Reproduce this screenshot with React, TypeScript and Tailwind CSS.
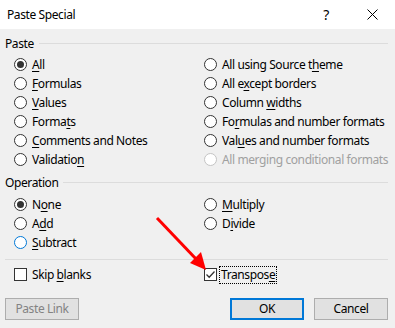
import type { ReactNode } from "react";

// Paste Special dialog, Windows 10 look
function Radio({ checked = false, disabled = false, hover = false }: { checked?: boolean; disabled?: boolean; hover?: boolean }) {
  const border = disabled ? "border-[#c4c4c4]" : hover ? "border-[#0078d7]" : "border-[#333333]";
  return (
    <span className={`flex items-center justify-center w-[13px] h-[13px] rounded-full border bg-white shrink-0 ${border}`}>
      {checked && <span className="block w-[7px] h-[7px] rounded-full bg-[#333333]" />}
    </span>
  );
}

function Check({ checked = false }: { checked?: boolean }) {
  return (
    <span className="flex items-center justify-center w-[13px] h-[13px] border border-[#333333] bg-white shrink-0">
      {checked && (
        <svg width="11" height="11" viewBox="0 0 11 11">
          <path d="M1.5 5.5 L4.2 8.2 L9.5 2.5" fill="none" stroke="#333333" strokeWidth="1.3" />
        </svg>
      )}
    </span>
  );
}

function Option({ children, checked, disabled, hover }: { children: ReactNode; checked?: boolean; disabled?: boolean; hover?: boolean }) {
  return (
    <div className="flex items-center gap-[5px] h-[19px] whitespace-nowrap">
      <Radio checked={checked} disabled={disabled} hover={hover} />
      <span className={disabled ? "text-[#a0a0a0]" : "text-black"}>{children}</span>
    </div>
  );
}

function U({ children }: { children: ReactNode }) {
  return <span className="underline underline-offset-2">{children}</span>;
}

function GroupLabel({ title }: { title: string }) {
  return (
    <div className="flex items-center h-[20px] pl-[5px] pr-[7px]">
      <span>{title}</span>
      <div className="flex-1 h-px bg-[#dcdcdc] ml-[5px] -mt-[2px]" />
    </div>
  );
}

export default function App() {
  return (
    <div
      className="relative w-[395px] h-[328px] bg-[#f0f0f0] text-[12px] leading-none tracking-[-0.4px] text-black overflow-hidden"
      style={{ fontFamily: '"Noto Sans", "Open Sans", sans-serif' }}
    >
      {/* Title bar */}
      <div className="flex items-center h-[29px] bg-white">
        <span className="pl-[7px] flex-1">Paste Special</span>
        <span className="w-[46px] text-center text-[14px]">?</span>
        <span className="w-[46px] flex justify-center">
          <svg width="11" height="11" viewBox="0 0 11 11">
            <path d="M0.5 0.5 L10.5 10.5 M10.5 0.5 L0.5 10.5" stroke="#000" strokeWidth="1" />
          </svg>
        </span>
      </div>

      <div className="mt-[5px]">
        <GroupLabel title="Paste" />
        <div className="grid grid-cols-[190px_1fr] pl-[14px] mt-px">
          <Option checked><U>A</U>ll</Option>
          <Option>All using Source t<U>h</U>eme</Option>
          <Option><U>F</U>ormulas</Option>
          <Option>All e<U>x</U>cept borders</Option>
          <Option><U>V</U>alues</Option>
          <Option>Column <U>w</U>idths</Option>
          <Option>Forma<U>t</U>s</Option>
          <Option>Fo<U>r</U>mulas and number formats</Option>
          <Option><U>C</U>omments and Notes</Option>
          <Option>Val<U>u</U>es and number formats</Option>
          <Option>Validatio<U>n</U></Option>
          <Option disabled>All merging conditional formats</Option>
        </div>

        <div className="mt-[4px]">
          <GroupLabel title="Operation" />
        </div>
        <div className="grid grid-cols-[190px_1fr] pl-[14px] mt-[2px]">
          <Option checked>N<U>o</U>ne</Option>
          <Option><U>M</U>ultiply</Option>
          <Option>A<U>d</U>d</Option>
          <Option>D<U>i</U>vide</Option>
          <Option hover><U>S</U>ubtract</Option>
          <div />
        </div>

        <div className="h-px bg-[#dcdcdc] ml-[5px] mr-[7px] mt-[7px]" />

        <div className="grid grid-cols-[190px_1fr] pl-[14px] mt-[5px]">
          <div className="flex items-center gap-[5px] h-[19px]">
            <Check />
            <span>Skip <U>b</U>lanks</span>
          </div>
          <div className="flex items-center gap-[2px] h-[19px]">
            <Check checked />
            <span className="border border-dotted border-black px-px py-[2px]">Transpos<U>e</U></span>
          </div>
        </div>

        <div className="flex items-center mt-[14px] pl-[5px] pr-[7px]">
          <button className="w-[74px] h-[22px] border border-[#adadad] bg-[#e1e1e1] text-[#838383]">Paste Link</button>
          <div className="flex-1" />
          <button className="w-[74px] h-[22px] border-2 border-[#0078d7] bg-[#e1e1e1]">OK</button>
          <button className="w-[74px] h-[22px] ml-[10px] border border-[#adadad] bg-[#e1e1e1]">Cancel</button>
        </div>
      </div>

      {/* Red annotation arrow */}
      <svg className="absolute left-0 top-0 pointer-events-none" width="395" height="328" viewBox="0 0 395 328">
        <line x1="157" y1="218" x2="197" y2="260" stroke="#ff0000" strokeWidth="3" />
        <polygon points="206,270 190,263 201,252" fill="#ff0000" />
      </svg>
    </div>
  );
}
